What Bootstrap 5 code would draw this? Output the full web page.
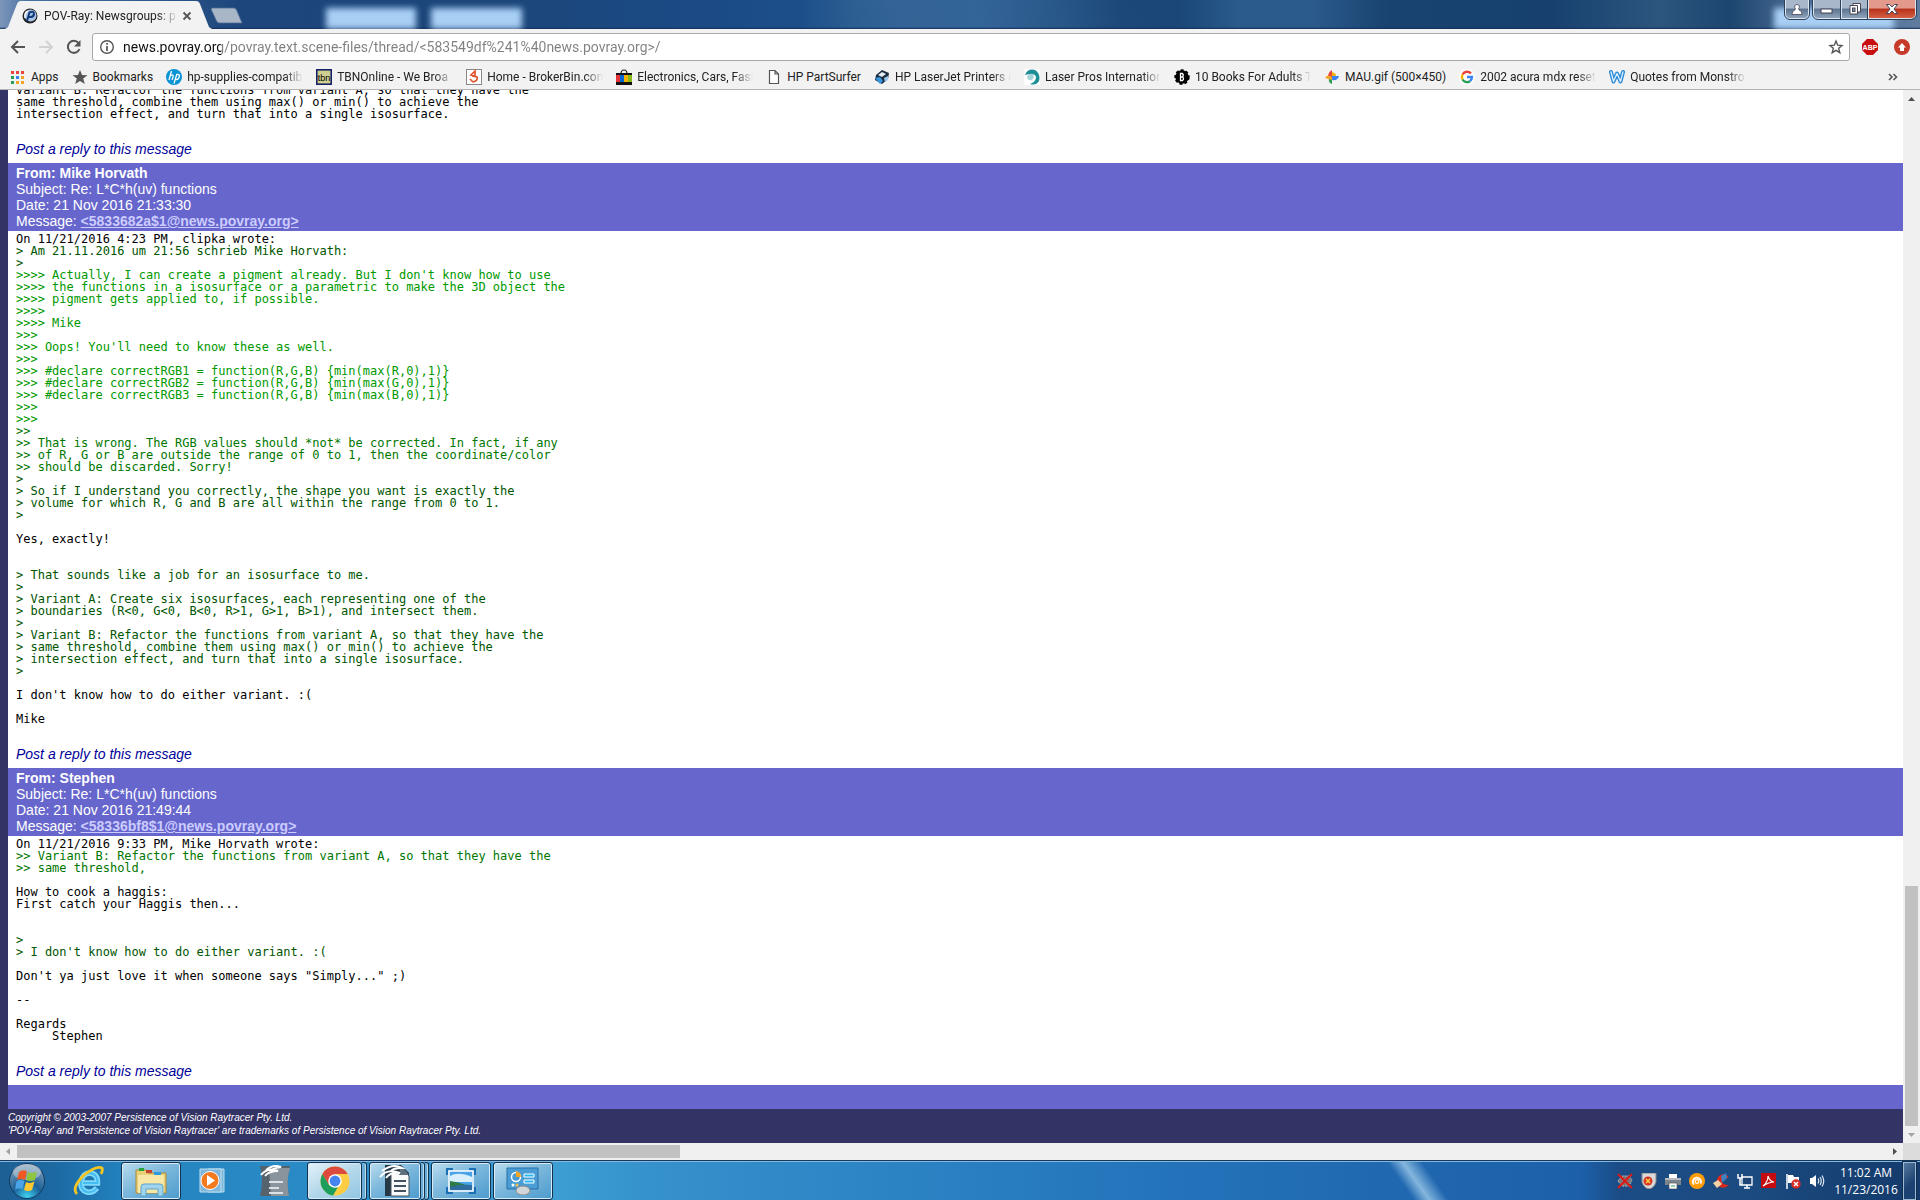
<!DOCTYPE html>
<html lang="en">
<head>
<meta charset="utf-8">
<meta name="viewport" content="width=device-width, initial-scale=1">
<title>POV-Ray: Newsgroups: povray.text.scene-files</title>
<link href="https://cdn.jsdelivr.net/npm/bootstrap@5.3.0/dist/css/bootstrap.min.css" rel="stylesheet">
<style>
body{font-family:Roboto,"Open Sans",sans-serif;font-size:12px;line-height:16px;color:#000;background:#fff}
button{padding:0;border:0;background:none;line-height:1}
svg{display:block;flex:none}
a{text-decoration:none}
.titlebar{height:29px;background:
 linear-gradient(#1d3c6600 93%,#17305a),
 linear-gradient(65deg,transparent 44%,#3b699a88 47%,transparent 60%),
 linear-gradient(90deg,#7d96ba 0,#46709f 30px,#1d467c 240px,#1b4679 500px,#1b4a85 700px,#1c4f8a 800px,#2b5d91 850px,#2f6296 980px,#1a4676 1120px,#1a4777 1180px,#2a5b8c 1240px,#2b5b8c 1310px,#18426f 1390px,#17406f 1550px,#2c567e 1660px,#1c456f 1730px,#4b6d94 1800px,#5f7c9f 100%)}
.glass-blob{top:8px;height:21px;background:#a9cff5;filter:blur(3px)}
.blob-a{left:326px;width:90px}
.blob-b{left:431px;width:91px}
.blob-c{right:26px;width:120px}
.tab-shape{left:5px;top:0}
.tab-row{padding-left:22px;padding-top:2px}
.tab-title,.bm-text{white-space:nowrap;color:#222}
.tab-title{width:134px;margin-left:6px}
.fade-end{-webkit-mask-image:linear-gradient(90deg,#000 84%,transparent);mask-image:linear-gradient(90deg,#000 84%,transparent)}
.win-btns button{height:19px;border:1px solid #dbe5f0;border-top:0;outline:1px solid #2c425c;background:linear-gradient(#a8b7ca 45%,#5d738f 50%,#8fa3bb);display:flex;align-items:center;justify-content:center}
.win-btns .close-btn{background:linear-gradient(#e39a8c 45%,#b8301a 50%,#d46044)}
.rb{border-radius:0 0 5px 5px}.rbl{border-radius:0 0 0 5px}.rbr{border-radius:0 0 5px 0}
.toolbar{background:#f2f2f2;height:35px;padding:4px 10px 4px 10px}
.omni{height:28px;border:1px solid #a9a9a9;border-radius:3px;background:#fff;padding:0 5px 0 6px}
.omni input{border:0;outline:0;font-size:14px;line-height:20px;padding:0;color:transparent;background:linear-gradient(90deg,#111 102px,#808080 102px);-webkit-background-clip:text;background-clip:text}
.bookmarks{height:26px;background:#f2f2f2;border-bottom:1px solid #b6b4b6;padding:0 22px 0 10px;gap:13px}
.bookmarks a{display:flex;align-items:center;gap:5px}
.bm-text.fade-end{width:116px}
.viewport{background:#fff;flex:1 1 0;min-height:0}
.page{background:#336;padding-left:8px}
.page>*{flex-shrink:0}
.msg-head{background:#66c;color:#fff;font:14px/16px "Liberation Sans",Arial,sans-serif;padding:2px 8px}
.msg-head a{color:#ccf;text-decoration:underline;font-weight:bold}
.msg-body{background:#fff;padding:2px 8px 6px}
.msg-body pre{font:12px/12px "DejaVu Sans Mono","Liberation Mono",monospace;margin:0 0 21px;overflow:visible;color:#000}
.msg-body a{display:block;font:italic 14px/16px "Liberation Sans",Arial,sans-serif;color:#009}
.q1{color:#050}.q2{color:#070}.q3{color:#090}.q4{color:#090}
.bar-end{background:#66c;height:24px}
.legal{color:#fff;font:italic 10px/13px "Liberation Sans",Arial,sans-serif;padding:2px 0 6px}
.sb{background:#f0f0f0}
.sb-v{width:17px;padding:0 2px}
.sb-h{height:17px;padding:2px 0}
.thumb{background:#c1c1c1}
.corner{width:17px;background:#dcdcdc}
.taskbar{height:40px;flex-shrink:0;gap:2px;border-top:1px solid #16395f;box-shadow:inset 0 1px #86b7dc;background:
 linear-gradient(55deg,transparent 72.6%,#b7def5aa 73.4%,transparent 74.4%),
 linear-gradient(90deg,#1c5f94 0,#1d6ba5 60px,#2384c0 130px,#2a8ac6 300px,#3c9ed2 560px,#3590cb 660px,#2b83c4 900px,#2474bb 1150px,#2068b0 1400px,#1c60aa 1580px,#1b4c85 1620px,#1b4b80 1750px,#143a6b 100%)}
.start{width:49px}
.task{width:60px;height:38px;display:flex;align-items:center;justify-content:center;border-radius:3px}
.task.open{border:1px solid #14324f;box-shadow:inset 0 0 0 1px #d5ecf8;background:linear-gradient(150deg,#b9dcee,#7db8dc 45%,#4b9bcd)}
.task.focus-win{width:55px;background:linear-gradient(150deg,#e4f2f9,#b5d8ea 50%,#8fc5e2)}
.task.two-deep{width:52px}
.stack-edge{width:5px;height:38px;border:1px solid #14324f;border-left:0;border-radius:0 3px 3px 0;box-shadow:inset -1px 0 #b9dcee;background:#69acd6}
.two-deep~.stack-edge{width:4px}
.tray{gap:8px}
.clock{color:#fff;font-family:"Open Sans","Noto Sans",sans-serif;line-height:17px;width:66px}
.peek{width:13px;height:38px;border:1px solid #9db8d2;outline:1px solid #102c4c;background:linear-gradient(135deg,#55779d,#1b4272 60%)}
</style>
<script src="https://cdn.jsdelivr.net/npm/bootstrap@5.3.0/dist/js/bootstrap.bundle.min.js"></script>
</head>
<body class="d-flex flex-column vh-100 overflow-hidden">
<header class="flex-shrink-0">
 <div class="titlebar d-flex justify-content-between position-relative overflow-hidden">
  <i class="glass-blob blob-a position-absolute"></i><i class="glass-blob blob-b position-absolute"></i><i class="glass-blob blob-c position-absolute"></i>
  <svg class="tab-shape position-absolute" width="240" height="29"><path d="M0 29 3 27 12 4Q13 1 16 1H191Q194 1 195 4L204 27 207 29Z" fill="#f2f2f2"/><path d="M207 8H229Q231 8 232 11L237 23H214Q212 23 211 20L206 9Z" fill="#a9b6c8" stroke="#4e6c93" stroke-width=".8"/></svg>
  <div class="tab-row d-flex align-items-center position-relative">
   <svg width="16" height="16" viewBox="0 0 16 16"><circle cx="8" cy="8" r="7.500" fill="#222"/><circle cx="8.500" cy="7.500" r="6" fill="#a8c4e8"/><path d="M5 13 7.500 4.500Q12 2.500 12 6 11.500 9.500 7 9" fill="none" stroke="#123a7a" stroke-width="2"/><path d="M3 10Q2 5 6 3" fill="none" stroke="#fff" stroke-width="1.500"/></svg>
   <span class="tab-title fade-end">POV-Ray: Newsgroups: p</span>
   <button aria-label="Close tab" class="ms-1"><svg width="10" height="10"><path d="M1.500 1.500 8.500 8.500M8.500 1.500 1.500 8.500" stroke="#555" stroke-width="1.800"/></svg></button>
  </div>
  <div class="win-btns d-flex position-relative me-1 align-items-start">
   <button class="rb me-1" style="width:24px" aria-label="Profile"><svg width="12" height="13"><path d="M6 1.500a2.300 2.300 0 0 1 1.600 4L8 7Q11 7.500 11 11.500H1Q1 7.500 4 7L4.400 5.500A2.300 2.300 0 0 1 6 1.500Z" fill="#fff" stroke="#445" stroke-width=".8"/></svg></button>
   <button class="rbl" style="width:28px" aria-label="Minimize"><svg width="14" height="10"><rect x="1" y="5" width="11" height="4" fill="#fff" stroke="#445"/></svg></button>
   <button style="width:27px" aria-label="Restore"><svg width="14" height="14"><path d="M5 1.500H12.500V10H5Z" fill="#fff" stroke="#445"/><path d="M2 3.500H9.500V12H2Z" fill="#fff" stroke="#445"/><rect x="4.500" y="6" width="2.500" height="3.500" fill="#8293ab" stroke="#445"/></svg></button>
   <button class="close-btn rbr" style="width:48px" aria-label="Close"><svg width="14" height="12"><path d="M1.500 1.500H4.500L7 4 9.500 1.500H12.500L9 6 12.500 10.500H9.500L7 8 4.500 10.500H1.500L5 6Z" fill="#fff" stroke="#445"/></svg></button>
  </div>
 </div>
 <div class="toolbar d-flex align-items-center">
  <button aria-label="Back" class="me-2"><svg width="20" height="16"><path d="M15 8H2M8 2 2 8 8 14" fill="none" stroke="#555" stroke-width="2"/></svg></button>
  <button aria-label="Forward" class="me-2"><svg width="20" height="16"><path d="M1 8H14M8 2 14 8 8 14" fill="none" stroke="#d2d2d2" stroke-width="2"/></svg></button>
  <button aria-label="Reload" class="me-2"><svg width="18" height="16"><path d="M12.500 4A6 6 0 1 0 13.500 10" fill="none" stroke="#555" stroke-width="2"/><path d="M14.500 1V7.500H8Z" fill="#555"/></svg></button>
  <div class="omni d-flex align-items-center flex-grow-1">
   <svg width="16" height="16"><circle cx="8" cy="8" r="6.300" fill="none" stroke="#555" stroke-width="1.400"/><path d="M8 7V12M8 4V5.700" stroke="#555" stroke-width="1.700"/></svg>
   <input class="flex-grow-1 ms-1 ps-1 me-2" type="text" aria-label="Address" value="news.povray.org/povray.text.scene-files/thread/&lt;583549df%241%40news.povray.org&gt;/">
   <button aria-label="Bookmark this page"><svg width="16" height="16"><path d="M8 2 9.700 6.200 14 6.500 10.700 9.300 11.800 13.700 8 11.300 4.200 13.700 5.300 9.300 2 6.500 6.300 6.200Z" fill="none" stroke="#555" stroke-width="1.400"/></svg></button>
  </div>
  <button aria-label="Adblock Plus" class="ms-2 ps-1 me-3"><svg width="16" height="16" viewBox="0 0 16 16"><path d="M5 0H11L16 5V11L11 16H5L0 11V5Z" fill="#c70d0d"/><text x="8" y="11" text-anchor="middle" font-size="7" font-weight="bold" font-family="Liberation Sans, sans-serif" fill="#fff">ABP</text></svg></button>
  <button aria-label="Update"><svg width="16" height="16"><circle cx="8" cy="8" r="8" fill="#c63a2a"/><path d="M8 4 12 8.500H10V12H6V8.500H4Z" fill="#fff"/></svg></button>
 </div>
 <nav class="bookmarks d-flex align-items-center" aria-label="Bookmarks bar">
  <a href="#"><svg width="16" height="16"><g fill="#e8453c"><path d="M1 2h3v3H1zM6 2h3v3H6zM11 2h3v3h-3z"/></g><path d="M1 7h3v3H1z" fill="#2a9d57"/><path d="M6 7h3v3H6z" fill="#3b83f0"/><path d="M11 7h3v3h-3zM11 12h3v3h-3zM6 12h3v3H6z" fill="#f5a623"/><path d="M1 12h3v3H1z" fill="#2a9d57"/></svg><span class="bm-text">Apps</span></a>
  <a href="#"><svg width="16" height="16"><path d="M8 1 10 6 15.500 6.200 11.200 9.600 12.800 15 8 12 3.200 15 4.800 9.600.5 6.200 6 6Z" fill="#555"/></svg><span class="bm-text">Bookmarks</span></a>
  <a href="#"><svg width="16" height="16"><circle cx="8" cy="8" r="8" fill="#0a93d5"/><path d="M5.500 2 3 11M4.200 7Q8 4.500 7 8L6 11M8 14.500 10.700 5.500Q14.500 5 13 8.500 12 11 9.500 10.500" fill="none" stroke="#fff" stroke-width="1.300"/></svg><span class="bm-text fade-end">hp-supplies-compatib</span></a>
  <a href="#"><svg width="16" height="16"><rect x=".8" y=".8" width="14.400" height="14.400" fill="#cfcf90" stroke="#0b1560" stroke-width="1.500"/><text x="8" y="12" text-anchor="middle" font-size="9" font-family="Liberation Sans, sans-serif" fill="#000">tbn</text></svg><span class="bm-text fade-end">TBNOnline - We Broa</span></a>
  <a href="#"><svg width="16" height="16"><rect x=".5" y=".5" width="15" height="15" fill="#fff" stroke="#888"/><path d="M9 2 5 6 9 7ZM7 13Q12 12 11 8L6 7M4 10 7 13" fill="none" stroke="#e0532a" stroke-width="1.700"/></svg><span class="bm-text fade-end">Home - BrokerBin.com</span></a>
  <a href="#"><svg width="16" height="16"><path d="M5 5Q5 1 8 1T11 5" fill="none" stroke="#222" stroke-width="1.200"/><path d="M0 4H16V7H0Z" fill="#111"/><path d="M0 6h4v7H0z" fill="#e53238"/><path d="M4 6h4v7H4z" fill="#0064d2"/><path d="M8 6h4v7H8z" fill="#f5af02"/><path d="M12 6h4v7h-4z" fill="#86b817"/><path d="M0 13H16V16H0Z" fill="#111"/></svg><span class="bm-text fade-end">Electronics, Cars, Fash</span></a>
  <a href="#"><svg width="16" height="16"><path d="M3.500 1.500H9L12.500 5V14.500H3.500ZM9 1.500V5H12.500" fill="#fff" stroke="#555" stroke-width="1.200"/></svg><span class="bm-text">HP PartSurfer</span></a>
  <a href="#"><svg width="16" height="16"><path d="M2 6 8 1 15 4 14 10 8 15 1 11Z" fill="#1c2c40"/><path d="M4 6 8 3 12 5 8 8Z" fill="#e6edf5"/><path d="M1 9 6 8 9 12 6 15Z" fill="#3896dc"/><path d="M10 9 14 7V11L11 13Z" fill="#9cc8ee"/></svg><span class="bm-text fade-end">HP LaserJet Printers &amp;</span></a>
  <a href="#"><svg width="16" height="16"><rect width="16" height="16" fill="#fff"/><path d="M1 6Q4-1 11 1 17 5 15 12 12 17 6 15 12 13 12 8 11 3 1 6Z" fill="#1d8f97"/><path d="M3 8Q5 4 9 5 11 8 8 11 4 12 3 8Z" fill="#a6d5d8"/></svg><span class="bm-text fade-end">Laser Pros Internation</span></a>
  <a href="#"><svg width="16" height="16"><circle cx="8" cy="8" r="6.700" fill="#000" stroke="#000" stroke-width="2" stroke-dasharray="3 2"/><path d="M6.500 4.500H8.500Q10 6 8.500 8 10.500 9.500 8.500 11.500H6.500ZM6.500 8H8.500" fill="none" stroke="#fff" stroke-width="1.300"/></svg><span class="bm-text fade-end">10 Books For Adults T</span></a>
  <a href="#"><svg width="16" height="16"><path d="M8 1V8H4Q4 3 8 1Z" fill="#e8453c"/><path d="M8 3Q12 4 12 7L8 8Z" fill="#f5b400"/><path d="M8 7H15Q14 12 8 11Z" fill="#3b83f0"/><path d="M8 8V15Q4 14 5 9Z" fill="#2a9d57"/><path d="M1 9Q3 5 8 8V11Z" fill="#f5a623"/></svg><span class="bm-text">MAU.gif (500×450)</span></a>
  <a href="#"><svg width="16" height="16"><circle cx="8" cy="8" r="8" fill="#fff"/><path d="M12 4.500A5.200 5.200 0 0 0 3.500 5.500" fill="none" stroke="#e8453c" stroke-width="2.400"/><path d="M3.500 5.500A5.500 5.500 0 0 0 3.500 10.500" fill="none" stroke="#f5b400" stroke-width="2.400"/><path d="M3.500 10.500A5.200 5.200 0 0 0 11 12.200" fill="none" stroke="#2a9d57" stroke-width="2.400"/><path d="M11 12.200Q13 10.500 13 8H8" fill="none" stroke="#3b83f0" stroke-width="2.400"/></svg><span class="bm-text fade-end">2002 acura mdx reset</span></a>
  <a href="#"><svg width="16" height="16"><path d="M2 3 4.500 12.500 8 4.500 11.500 12.500 14 3" fill="none" stroke="#2a8ad8" stroke-width="4" stroke-linejoin="round" stroke-linecap="round"/><path d="M2 3 4.500 12.500 8 4.500 11.500 12.500 14 3" fill="none" stroke="#dceefa" stroke-width="1.300" stroke-linejoin="round" stroke-linecap="round"/></svg><span class="bm-text fade-end">Quotes from Monstro</span></a>
  <button class="ms-auto" aria-label="More bookmarks"><svg width="10" height="8"><path d="M1 1 4 4 1 7M5.500 1 8.500 4 5.500 7" fill="none" stroke="#555" stroke-width="1.600"/></svg></button>
 </nav>
</header>
<main class="d-flex overflow-hidden viewport">
 <div class="page flex-grow-1 d-flex flex-column justify-content-end">
  <article class="msg-body"><pre>Variant B: Refactor the functions from variant A, so that they have the
same threshold, combine them using max() or min() to achieve the
intersection effect, and turn that into a single isosurface.
</pre><a href="#">Post a reply to this message</a></article>
  <div class="msg-head"><b>From: Mike Horvath</b><br>Subject: Re: L*C*h(uv) functions<br>Date: 21 Nov 2016 21:33:30<br>Message: <a href="#">&lt;5833682a$1@news.povray.org&gt;</a></div>
  <article class="msg-body"><pre>On 11/21/2016 4:23 PM, clipka wrote:
<span class="q1">&gt; Am 21.11.2016 um 21:56 schrieb Mike Horvath:
&gt;</span>
<span class="q4">&gt;&gt;&gt;&gt; Actually, I can create a pigment already. But I don't know how to use
&gt;&gt;&gt;&gt; the functions in a isosurface or a parametric to make the 3D object the
&gt;&gt;&gt;&gt; pigment gets applied to, if possible.
&gt;&gt;&gt;&gt;
&gt;&gt;&gt;&gt; Mike</span>
<span class="q3">&gt;&gt;&gt;
&gt;&gt;&gt; Oops! You'll need to know these as well.
&gt;&gt;&gt;
&gt;&gt;&gt; #declare correctRGB1 = function(R,G,B) {min(max(R,0),1)}
&gt;&gt;&gt; #declare correctRGB2 = function(R,G,B) {min(max(G,0),1)}
&gt;&gt;&gt; #declare correctRGB3 = function(R,G,B) {min(max(B,0),1)}
&gt;&gt;&gt;
&gt;&gt;&gt;</span>
<span class="q2">&gt;&gt;
&gt;&gt; That is wrong. The RGB values should *not* be corrected. In fact, if any
&gt;&gt; of R, G or B are outside the range of 0 to 1, then the coordinate/color
&gt;&gt; should be discarded. Sorry!</span>
<span class="q1">&gt;
&gt; So if I understand you correctly, the shape you want is exactly the
&gt; volume for which R, G and B are all within the range from 0 to 1.
&gt;</span>

Yes, exactly!


<span class="q1">&gt; That sounds like a job for an isosurface to me.
&gt;
&gt; Variant A: Create six isosurfaces, each representing one of the
&gt; boundaries (R&lt;0, G&lt;0, B&lt;0, R&gt;1, G&gt;1, B&gt;1), and intersect them.
&gt;
&gt; Variant B: Refactor the functions from variant A, so that they have the
&gt; same threshold, combine them using max() or min() to achieve the
&gt; intersection effect, and turn that into a single isosurface.
&gt;</span>

I don't know how to do either variant. :(

Mike
</pre><a href="#">Post a reply to this message</a></article>
  <div class="msg-head"><b>From: Stephen</b><br>Subject: Re: L*C*h(uv) functions<br>Date: 21 Nov 2016 21:49:44<br>Message: <a href="#">&lt;58336bf8$1@news.povray.org&gt;</a></div>
  <article class="msg-body"><pre>On 11/21/2016 9:33 PM, Mike Horvath wrote:
<span class="q2">&gt;&gt; Variant B: Refactor the functions from variant A, so that they have the
&gt;&gt; same threshold,</span>

How to cook a haggis:
First catch your Haggis then...


<span class="q1">&gt;
&gt; I don't know how to do either variant. :(</span>

Don't ya just love it when someone says "Simply..." ;)

--

Regards
     Stephen
</pre><a href="#">Post a reply to this message</a></article>
  <div class="bar-end"></div>
  <footer class="legal">Copyright © 2003-2007 Persistence of Vision Raytracer Pty. Ltd.<br>'POV-Ray' and 'Persistence of Vision Raytracer' are trademarks of Persistence of Vision Raytracer Pty. Ltd.</footer>
 </div>
 <div class="sb sb-v d-flex flex-column align-items-center">
  <svg width="13" height="17"><path d="M3 11 6.500 7 10 11Z" fill="#505050"/></svg>
  <div class="flex-grow-1 w-100 d-flex flex-column justify-content-end"><div class="thumb" style="height:23.600%"></div></div>
  <svg width="13" height="17"><path d="M3 7 6.500 11 10 7Z" fill="#a3a3a3"/></svg>
 </div>
</main>
<div class="d-flex flex-shrink-0">
 <div class="sb sb-h d-flex flex-grow-1 align-items-stretch">
  <svg width="17" height="13"><path d="M10 3 6 6.500 10 10Z" fill="#a3a3a3"/></svg>
  <div class="flex-grow-1 d-flex"><div class="thumb" style="width:35.500%"></div></div>
  <svg width="17" height="13"><path d="M7 3 11 6.500 7 10Z" fill="#505050"/></svg>
 </div>
 <div class="corner"></div>
</div>
<footer class="taskbar d-flex align-items-center">
 <button class="start ms-2" aria-label="Start"><svg width="38" height="38" viewBox="0 0 38 38"><defs><radialGradient id="orb" cx=".5" cy=".95" r=".9"><stop offset="0" stop-color="#3fd3f2"/><stop offset=".45" stop-color="#1a6199"/><stop offset="1" stop-color="#7f9db5"/></radialGradient></defs><circle cx="19" cy="19" r="17.500" fill="url(#orb)" stroke="#13395c"/><ellipse cx="19" cy="10" rx="14" ry="8" fill="#fff" opacity=".35"/><path d="M11 10Q15 7 19 9.500L17 18Q13 16 9 18Z" fill="#ef5a24"/><path d="M20 10Q25 12 29 9.500L27 18Q22 20 18 18Z" fill="#8ec63f"/><path d="M8.500 19.500Q12 17 16.500 19L14.500 27Q10 25 7 28Z" fill="#4aa5e8"/><path d="M18 20Q22 22 26.500 19.500L24 28Q20 30 16 28Z" fill="#ffc830"/></svg></button>
 <button class="task" aria-label="Internet Explorer"><svg width="34" height="34" viewBox="0 0 34 34"><path d="M25 24Q21 29 15 28 8 26 9 17.500 11 9 18 9 26 10 25.500 19H11" fill="none" stroke="#7fd9fb" stroke-width="5.500"/><path d="M25 24Q21 29 15 28 8 26 9 17.500 11 9 18 9 26 10 25.500 19H11" fill="none" stroke="#45bdf2" stroke-width="2"/><path d="M5 30Q-1 24 12 11 25 1 30 4 31 7 29 10" fill="none" stroke="#f6c520" stroke-width="2.800"/></svg></button>
 <button class="task open" aria-label="Windows Explorer"><svg width="34" height="32" viewBox="0 0 34 32"><path d="M2 5H12L14 8H32V28H2Z" fill="#e9cf78" stroke="#a98a36"/><path d="M5 3H10V6H5Z" fill="#26a33a"/><path d="M12 5H18V8H12Z" fill="#c6402b"/><path d="M20 7H27V10H20Z" fill="#2d9be0"/><path d="M4 10H30V28H4Z" fill="#f8e8a7"/><path d="M7 31V22Q7 19 10 19H26Q29 19 29 22V31H24V24H12V31Z" fill="#9fd4ec" stroke="#5ba5cb"/></svg></button>
 <button class="task" aria-label="Media Player"><svg width="30" height="30" viewBox="0 0 30 30"><path d="M10 3H26V26H10Z" fill="#7cb9dc" stroke="#b6dbee"/><path d="M2 3H23V26H2Z" fill="#7fb6dc" stroke="#bfe0f1"/><circle cx="12" cy="14.500" r="9" fill="#f47a1f" stroke="#fff"/><path d="M9 9 17 14.500 9 20Z" fill="#fff"/></svg></button>
 <button class="task" aria-label="OpenOffice"><svg width="32" height="34" viewBox="0 0 32 34"><path d="M1 2H31Q27 17 30 32H1Q5 17 1 2Z" fill="#56626c"/><path d="M10 4H31Q27 17 30 32H12Z" fill="#89949c"/><path d="M2 11Q8 3 19 7 10 7 6 12M7 6Q14 0 22 3 14 4 12 7" fill="none" stroke="#fff" stroke-width="2"/><path d="M10 18H24M10 24H20M10 29H24" stroke="#dbe1e5" stroke-width="2"/></svg></button>
 <div class="d-flex"><button class="task open focus-win" aria-label="Chrome"><svg width="30" height="30" viewBox="0 0 30 30"><circle cx="15" cy="15" r="14.500" fill="#ffcd43"/><path d="M15 .5A14.500 14.500 0 0 1 27.600 8H15L8.500 18.500 2.400 8A14.500 14.500 0 0 1 15 .5Z" fill="#dc4a3d"/><path d="M2.400 8 9 19Q12 22 18 21L13 29.500A14.500 14.500 0 0 1 2.400 8Z" fill="#1c9f5c"/><circle cx="15" cy="15" r="6.800" fill="#fff"/><circle cx="15" cy="15" r="5.400" fill="#4485f1"/></svg></button><i class="stack-edge"></i></div>
 <div class="d-flex"><button class="task open two-deep" aria-label="OpenOffice Writer"><svg width="32" height="34" viewBox="0 0 32 34"><path d="M6 1H22L30 9V32H6Z" fill="#263746"/><path d="M12 9H27L30 12V32H12Z" fill="#f8fafb" stroke="#43525e"/><path d="M22 1 30 11H20Z" fill="#5f6f7d"/><path d="M1 13Q8 4 21 9 11 8 7 14M3 7Q14-1 23 4 14 4 12 7" fill="none" stroke="#fff" stroke-width="2"/><path d="M15 17H27M15 22H27M15 27H27" stroke="#43525e" stroke-width="1.800"/></svg></button><i class="stack-edge"></i><i class="stack-edge"></i></div>
 <button class="task open" aria-label="Photo Viewer"><svg width="30" height="26" viewBox="0 0 30 26"><path d="M1 7V1H7M23 1H29V7M29 19V25H23M7 25H1V19" fill="none" stroke="#1d6fb4" stroke-width="2.500"/><rect x="3" y="3" width="24" height="20" fill="#4aa3e6" stroke="#fff" stroke-width="1.500"/><path d="M4 8Q12 3 26 9V14H4Z" fill="#d9effb"/><path d="M4 13Q12 14 20 17L26 18V22H4Z" fill="#2f7a45"/><path d="M4 19Q14 16 26 17V22H4Z" fill="#2f6d9f"/></svg></button>
 <button class="task open" aria-label="Control Panel"><svg width="34" height="28" viewBox="0 0 34 28"><path d="M1 1H32V22H1Z" fill="#4a9cd4" stroke="#2670a6"/><circle cx="10" cy="10" r="4.500" fill="none" stroke="#fff" stroke-width="1.500"/><path d="M10 10V4Q15 5 15 10Z" fill="#f5a623"/><path d="M18 7H28V10H18ZM18 13H28V16H18Z" fill="#29b6f0" stroke="#fff"/><circle cx="7" cy="18" r="1.500" fill="#fff"/><circle cx="11" cy="18" r="1.500" fill="#f5c050"/><ellipse cx="17" cy="23.500" rx="7" ry="4.500" fill="#d3d6d8" stroke="#888"/></svg></button>
 <div class="d-flex align-items-center ms-auto">
  <div class="tray d-flex me-2">
  <svg width="16" height="16"><path d="M1 8 5 3H12L15 7 12 13H5Z" fill="#777" stroke="#bbb" stroke-dasharray="2 1"/><path d="M1 1 15 15M15 1 1 15" stroke="#e01818" stroke-width="2"/></svg>
  <svg width="16" height="16"><path d="M1 0H15V9Q13 15 8 16 3 15 1 9Z" fill="#d9d9d9" stroke="#888"/><circle cx="7" cy="8" r="4.500" fill="#d43524"/><path d="M5 6 9 10M9 6 5 10" stroke="#ffd23c" stroke-width="1.500"/></svg>
  <svg width="16" height="16"><path d="M4 1H12V6H4Z" fill="#fff"/><path d="M0 5H16V12H0Z" fill="#7b848b"/><path d="M0 5H16V7H0Z" fill="#b5bbc0"/><path d="M4 10H12V16H4Z" fill="#fff" stroke="#555" stroke-width=".7"/><path d="M6 13H10" stroke="#2a9d57"/></svg>
  <svg width="16" height="16"><circle cx="8" cy="8" r="8" fill="#ff9d0a"/><path d="M5 11.500A4 4 0 1 1 11.500 10.500" fill="none" stroke="#fff" stroke-width="1.800"/><circle cx="8" cy="8.500" r="1.800" fill="none" stroke="#fff" stroke-width="1.200"/></svg>
  <svg width="16" height="16"><path d="M15 3Q9-1 5 4 2 10 7 14 12 16 16 12 10 12 9 9 9 5 15 5Z" fill="#d9281c"/><path d="M8 3 13 0 14 5 9 10Z" fill="#3d83c4"/><path d="M0 10 5 7 9 11 4 15Z" fill="#f2d2a2"/></svg>
  <svg width="16" height="16"><path d="M5 4H15V12H5Z" fill="#1b4374" stroke="#fff" stroke-width="1.300"/><path d="M7 15H13M10 12V15" stroke="#fff" stroke-width="1.500"/><path d="M1 1V5H5V1M3 5V12H5" fill="none" stroke="#fff" stroke-width="1.500"/></svg>
  <svg width="16" height="16"><rect width="15" height="15" fill="#c40c10"/><path d="M2 13Q7 9 7 3 9 9 13 9 8 9 2 13" fill="none" stroke="#fff" stroke-width="1.100"/></svg>
  <svg width="16" height="16"><path d="M2 1V16" stroke="#fff" stroke-width="1.500"/><path d="M3 2H8L9 4H14V10H3Z" fill="#fff"/><circle cx="11" cy="11" r="4.700" fill="#d92c22"/><path d="M9 9 13 13M13 9 9 13" stroke="#fff" stroke-width="1.500"/></svg>
  <svg width="16" height="16"><path d="M1 5H3L7 2V14L3 11H1Z" fill="#fff"/><path d="M9 5.500Q10.500 8 9 10.500M11 4Q13.500 8 11 12M13 2.500Q16.500 8 13 13.500" fill="none" stroke="#dfe8f0" stroke-width="1.200"/></svg>
  </div>
  <div class="clock text-center">11:02 AM<br>11/23/2016</div>
  <button class="peek ms-1 me-1" aria-label="Show desktop"></button>
 </div>
</footer>
</body>
</html>
